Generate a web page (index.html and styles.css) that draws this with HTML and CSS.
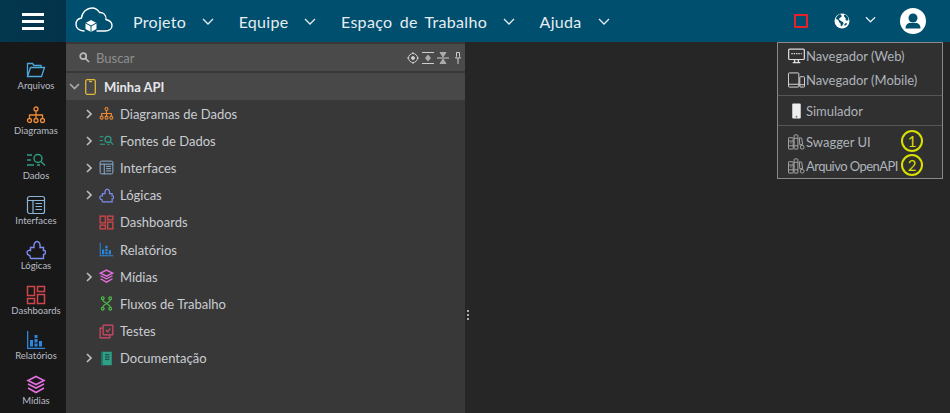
FILE: index.html
```html
<!DOCTYPE html>
<html lang="pt">
<head>
<meta charset="utf-8">
<title>Minha API</title>
<link rel="stylesheet" href="styles.css">
</head>
<body>
<header class="topbar">
  <button class="burger" aria-label="Menu"><span></span><span></span><span></span></button>
  <div class="brand">
    <svg width="38" height="26" viewBox="0 0 38 26" fill="none" stroke="#fff" stroke-width="1.400" stroke-linecap="round"><path d="M9 24C4 24 1 21 1 17.500C1 14 3.500 11.500 6.500 11C7 5 12 1 17 1C20.500 1 23 3 24.500 5.500C28 5 31.500 8 31 12.500C34.500 13.500 37 15.500 37 18.500C37 22 34 24 30 24H22"/><path d="M16 13L21.500 16V22L16 25L10.500 22V16Z" fill="#fff" stroke="none"/><path d="M10.500 16L16 19L21.500 16M16 19V25" stroke="#00506e" stroke-width="1"/></svg>
  </div>
  <nav class="mainnav">
    <a class="navitem">Projeto<svg class="chev" width="12" height="7" viewBox="0 0 12 7"><path d="M1 1l5 5 5-5"/></svg></a>
    <a class="navitem">Equipe<svg class="chev" width="12" height="7" viewBox="0 0 12 7"><path d="M1 1l5 5 5-5"/></svg></a>
    <a class="navitem wide">Espaço de Trabalho<svg class="chev" width="12" height="7" viewBox="0 0 12 7"><path d="M1 1l5 5 5-5"/></svg></a>
    <a class="navitem">Ajuda<svg class="chev" width="12" height="7" viewBox="0 0 12 7"><path d="M1 1l5 5 5-5"/></svg></a>
  </nav>
  <div class="tools">
    <span class="stopbox"></span>
    <svg class="globe" width="16" height="16" viewBox="0 0 16 16"><circle cx="8" cy="8" r="7.500" fill="#fff"/><path d="M5 1.500C3.500 3 2 4 2 6c1 .5 2 .5 2.500 1.500S5 9.500 6 10s.5 2.500 1 3.500c1-.5 2-2 2.500-3S8 8.500 7 8 5.500 6.500 5 6.500 5.500 5 6.500 4.500 8 3.500 7.500 2.500 6 1 5 1.500ZM10 2c-.5 1 .5 2 1 2.500s1 1 .5 2 1.500 1 2.500 1 .5-3-1-4.500S10.500 1.500 10 2ZM11 10.500c-.5.500-1 1.500-.5 2s2-.5 2.500-1.500-1.500-1-2-.5Z" fill="#00506e"/></svg>
    <svg class="chev chev-lang" width="11" height="7" viewBox="0 0 12 7"><path d="M1 1l5 5 5-5"/></svg>
    <svg class="avatar" width="26" height="26" viewBox="0 0 26 26"><circle cx="13" cy="13" r="13" fill="#fff"/><circle cx="13" cy="10" r="4.500" fill="#00506e"/><path d="M5.500 20.500c0-4 2.500-5.500 4.500-5.500h6c2 0 4.500 1.500 4.500 5.500Z" fill="#00506e"/></svg>
  </div>
</header>

<main class="workspace">
  <aside class="sidebar">
    <div class="sideitem"><svg class="sideicon" viewBox="0 0 20 20" fill="none" stroke="#4aa8da" stroke-width="1.300"><path d="M1.500 15.500V3.500h5l1.500 2h7v2"/><path d="M1.500 16.500l3-9h14l-3 9Z"/></svg><span>Arquivos</span></div>
    <div class="sideitem"><svg class="sideicon" viewBox="0 0 20 20" fill="none" stroke="#f08a35" stroke-width="1.300"><circle cx="10" cy="4" r="2"/><circle cx="3.500" cy="15.500" r="2"/><circle cx="10" cy="15.500" r="2"/><circle cx="16.500" cy="15.500" r="2"/><path d="M10 6v7.500M3.500 13.500V10h13v3.500"/></svg><span>Diagramas</span></div>
    <div class="sideitem"><svg class="sideicon" viewBox="0 0 20 20" fill="none" stroke="#2f9f85" stroke-width="1.400"><path d="M1 5h5M1 10h4M1 15h7"/><circle cx="12" cy="8.500" r="4"/><path d="M15 11.500l4 4M11 15h3"/></svg><span>Dados</span></div>
    <div class="sideitem"><svg class="sideicon" viewBox="0 0 20 20" fill="none" stroke="#8cb4d6" stroke-width="1.200"><rect x="1.500" y="1.500" width="17" height="17" rx="2"/><path d="M1.500 5.500h17M7 5.500v13M9.500 8.500h6.500M9.500 11.500h6.500M9.500 14.500h6.500"/></svg><span>Interfaces</span></div>
    <div class="sideitem"><svg class="sideicon" viewBox="0 0 20 20" fill="none" stroke="#7f8cf0" stroke-width="1.400"><path d="M4.500 7.500H8C7.500 4 9 1.500 11 1.500S14.500 4 14 7.500H17.500V10.500C19 10 19.500 11 19.500 12.500S18.500 14.500 17.500 14.500V18.500H5C3.500 18.500 5 16 3.500 15.500S1 14.500 1 12.500 3 10 4.500 10.500Z"/></svg><span>Lógicas</span></div>
    <div class="sideitem"><svg class="sideicon" viewBox="0 0 20 20" fill="none" stroke="#d0454a" stroke-width="1.500"><rect x="1.500" y="1.500" width="7" height="9"/><rect x="11.500" y="1.500" width="7" height="5"/><rect x="1.500" y="13.500" width="7" height="5"/><rect x="11.500" y="9.500" width="7" height="9"/></svg><span>Dashboards</span></div>
    <div class="sideitem"><svg class="sideicon" viewBox="0 0 20 20" fill="#2b86e0"><path d="M1 1h1.300v16.700H19V19H1Z"/><rect x="4" y="10" width="3" height="6.500"/><rect x="8.500" y="5" width="3" height="3"/><rect x="8.500" y="9" width="3" height="3.500"/><rect x="8.500" y="13.500" width="3" height="3"/><rect x="13" y="11" width="3" height="5.500"/></svg><span>Relatórios</span></div>
    <div class="sideitem"><svg class="sideicon" viewBox="0 0 20 20" fill="none" stroke="#e56fe0" stroke-width="1.600"><path d="M10 1.500l8 4-8 4-8-4Z"/><path d="M2 9l8 4 8-4M2 13l8 4.500 8-4.500"/></svg><span>Mídias</span></div>
  </aside>

  <section class="explorer">
    <div class="search">
      <svg class="searchicon" width="11" height="11" viewBox="0 0 11 11" fill="none" stroke="#bbb" stroke-width="1.700"><circle cx="4.200" cy="4.200" r="3"/><path d="M6.500 6.500L10 10"/></svg>
      <span class="searchtext">Buscar</span>
      <div class="searchtools">
        <svg width="12" height="12" viewBox="0 0 12 12" fill="none" stroke="#ccc" stroke-width="1"><circle cx="6" cy="6" r="4.500"/><circle cx="6" cy="6" r="1.500" fill="#ccc"/><path d="M6 0v1.500M6 10.500V12M0 6h1.500M10.500 6H12"/></svg>
        <svg width="12" height="12" viewBox="0 0 12 12" fill="none" stroke="#ccc"><path d="M0 .5h12M0 11.500h12"/><path d="M6 2.500l3 3.500-3 3.500-3-3.500Z" fill="#aaa" stroke="none"/></svg>
        <svg width="12" height="12" viewBox="0 0 12 12" fill="none" stroke="#ccc"><path d="M0 6h12"/><path d="M3 .5h6L6 5ZM3 11.500h6L6 7Z" fill="#aaa" stroke="#ccc" stroke-width=".6"/></svg>
        <svg class="pin" width="6" height="12" viewBox="0 0 6 12" fill="none" stroke="#ccc"><path d="M1.500.5h3v4l1 1.500h-5l1-1.500Z"/><path d="M3 6v6"/></svg>
      </div>
    </div>
    <div class="rootrow">
      <svg class="caret-down" width="11" height="7" viewBox="0 0 11 7" fill="none" stroke="#aaa" stroke-width="1.700"><path d="M1 1l4.500 4.500L10 1"/></svg>
      <svg class="rooticon" width="11" height="16" viewBox="0 0 11 16" fill="none" stroke="#e0b83a" stroke-width="1.300"><rect x=".7" y=".7" width="9.600" height="14.600" rx="1.500"/><path d="M4 2.500h3"/></svg>
      <span>Minha API</span>
    </div>
    <ul class="tree">
      <li class="treerow"><svg class="caret" width="6" height="10" viewBox="0 0 6 10"><path d="M1 1l4 4-4 4"/></svg><svg class="treeicon" viewBox="0 0 20 20" fill="none" stroke="#f08a35" stroke-width="1.400"><circle cx="10" cy="4" r="2"/><circle cx="3.500" cy="15.500" r="2"/><circle cx="10" cy="15.500" r="2"/><circle cx="16.500" cy="15.500" r="2"/><path d="M10 6v7.500M3.500 13.500V10h13v3.500"/></svg><span>Diagramas de Dados</span></li>
      <li class="treerow"><svg class="caret" width="6" height="10" viewBox="0 0 6 10"><path d="M1 1l4 4-4 4"/></svg><svg class="treeicon" viewBox="0 0 20 20" fill="none" stroke="#2f9f85" stroke-width="1.500"><path d="M1 5h5M1 10h4M1 15h7"/><circle cx="12" cy="8.500" r="4"/><path d="M15 11.500l4 4M11 15h3"/></svg><span>Fontes de Dados</span></li>
      <li class="treerow"><svg class="caret" width="6" height="10" viewBox="0 0 6 10"><path d="M1 1l4 4-4 4"/></svg><svg class="treeicon" viewBox="0 0 20 20" fill="none" stroke="#8cb4d6" stroke-width="1.300"><rect x="1.500" y="1.500" width="17" height="17" rx="2"/><path d="M1.500 5.500h17M7 5.500v13M9.500 8.500h6.500M9.500 11.500h6.500M9.500 14.500h6.500"/></svg><span>Interfaces</span></li>
      <li class="treerow"><svg class="caret" width="6" height="10" viewBox="0 0 6 10"><path d="M1 1l4 4-4 4"/></svg><svg class="treeicon" viewBox="0 0 20 20" fill="none" stroke="#7f8cf0" stroke-width="1.600"><path d="M4.500 7.500H8C7.500 4 9 1.500 11 1.500S14.500 4 14 7.500H17.500V10.500C19 10 19.500 11 19.500 12.500S18.500 14.500 17.500 14.500V18.500H5C3.500 18.500 5 16 3.500 15.500S1 14.500 1 12.500 3 10 4.500 10.500Z"/></svg><span>Lógicas</span></li>
      <li class="treerow leaf"><svg class="treeicon" viewBox="0 0 20 20" fill="none" stroke="#d0454a" stroke-width="1.800"><rect x="1.500" y="1.500" width="7" height="9"/><rect x="11.500" y="1.500" width="7" height="5"/><rect x="1.500" y="13.500" width="7" height="5"/><rect x="11.500" y="9.500" width="7" height="9"/></svg><span>Dashboards</span></li>
      <li class="treerow leaf"><svg class="treeicon" viewBox="0 0 20 20" fill="#2b86e0"><path d="M1 1h1.300v16.700H19V19H1Z"/><rect x="4" y="10" width="3" height="6.500"/><rect x="8.500" y="5" width="3" height="3"/><rect x="8.500" y="9" width="3" height="3.500"/><rect x="8.500" y="13.500" width="3" height="3"/><rect x="13" y="11" width="3" height="5.500"/></svg><span>Relatórios</span></li>
      <li class="treerow"><svg class="caret" width="6" height="10" viewBox="0 0 6 10"><path d="M1 1l4 4-4 4"/></svg><svg class="treeicon" viewBox="0 0 20 20" fill="none" stroke="#e56fe0" stroke-width="1.800"><path d="M10 1.500l8 4-8 4-8-4Z"/><path d="M2 9l8 4 8-4M2 13l8 4.500 8-4.500"/></svg><span>Mídias</span></li>
      <li class="treerow leaf"><svg class="treeicon" viewBox="0 0 20 20" fill="none" stroke="#4cb84a" stroke-width="1.700"><circle cx="5" cy="3" r="1.800"/><circle cx="15" cy="3" r="1.800"/><circle cx="5" cy="17" r="1.800"/><circle cx="15" cy="17" r="1.800"/><path d="M5 5c0 4 10 6 10 10M15 5c0 4-10 6-10 10"/></svg><span>Fluxos de Trabalho</span></li>
      <li class="treerow leaf"><svg class="treeicon" viewBox="0 0 20 20" fill="none" stroke="#d84a68" stroke-width="1.600"><rect x="5.500" y="1.500" width="13" height="13" rx="1"/><path d="M5 5.500H1.500v13h13V15"/><path d="M9 8l2.500 2.500L15 6"/></svg><span>Testes</span></li>
      <li class="treerow"><svg class="caret" width="6" height="10" viewBox="0 0 6 10"><path d="M1 1l4 4-4 4"/></svg><svg class="treeicon" viewBox="0 0 20 20"><path d="M3 1h14v18H3Z" fill="#2f9f85"/><path d="M3 1h2v18H3Z" fill="#1c6f5c"/><path d="M8 5h6M8 8h6M8 11h6" stroke="#1d3d38" stroke-width="1.300"/></svg><span>Documentação</span></li>
    </ul>
    <div class="handle"><i></i><i></i><i></i></div>
  </section>
  <div class="canvas"></div>
</main>

<div class="runmenu">
  <div class="menugroup">
    <div class="menuitem"><svg class="menuicon" viewBox="0 0 18 16" fill="none" stroke="#ddd" stroke-width="1.300"><rect x=".7" y=".7" width="16.600" height="11" rx="1"/><path d="M3.500 5.500h11" stroke-dasharray="1.500 1"/><path d="M5 15h8M7 12v3M11 12v3" stroke-width="1.500"/></svg><span>Navegador (Web)</span></div>
    <div class="menuitem"><svg class="menuicon" viewBox="0 0 18 16" fill="none" stroke="#ddd" stroke-width="1"><rect x=".5" y=".5" width="11" height="15" rx="1"/><path d="M.5 12.500h11"/><rect x="12.500" y="4.500" width="5" height="11" rx="1" fill="#303030"/><path d="M12.500 13h5"/></svg><span>Navegador (Mobile)</span></div>
  </div>
  <div class="menugroup">
    <div class="menuitem single"><svg class="menuicon" viewBox="0 0 18 16"><path d="M5.500 0h7a1 1 0 0 1 1 1v14a1 1 0 0 1-1 1h-7a1 1 0 0 1-1-1V1a1 1 0 0 1 1-1Z" fill="#eee"/><circle cx="9" cy="14" r=".9" fill="#666"/></svg><span>Simulador</span></div>
  </div>
  <div class="menugroup last">
    <div class="menuitem"><svg class="menuicon" viewBox="0 0 18 16" fill="none" stroke="#aaa" stroke-width="1"><rect x=".5" y="3.500" width="5" height="12" rx=".5"/><rect x="6.500" y=".5" width="4" height="15" rx=".5"/><path d="M.5 7h5M.5 12h5M6.500 4h4M6.500 12h4"/><path d="M12 3.500l2.500.5 1 6.500-3 .5Z"/><circle cx="15" cy="13.500" r="2"/><path d="M2 9h2" stroke="#888"/></svg><span>Swagger UI</span><b class="badge">1</b></div>
    <div class="menuitem"><svg class="menuicon" viewBox="0 0 18 16" fill="none" stroke="#aaa" stroke-width="1"><rect x=".5" y="3.500" width="5" height="12" rx=".5"/><rect x="6.500" y=".5" width="4" height="15" rx=".5"/><path d="M.5 7h5M.5 12h5M6.500 4h4M6.500 12h4"/><path d="M12 3.500l2.500.5 1 6.500-3 .5Z"/><circle cx="15" cy="13.500" r="2"/><path d="M2 9h2" stroke="#888"/></svg><span class="tight">Arquivo OpenAPI</span><b class="badge">2</b></div>
  </div>
</div>
</body>
</html>
```
FILE: styles.css
```css
* { box-sizing: border-box; }
html, body { height: 100%; }
body {
  margin: 0;
  width: 950px;
  height: 413px;
  overflow: hidden;
  background: #262626;
  font-family: "Lato", "Noto Sans", sans-serif;
  color: #c9ccd2;
  position: relative;
}
.topbar {
  height: 42px;
  display: flex;
  align-items: center;
  background: #004f6e;
}
.burger {
  width: 66px;
  height: 42px;
  border: 0;
  padding: 0;
  background: linear-gradient(90deg, #02384f, #03324a);
  display: flex;
  flex-direction: column;
  align-items: center;
  justify-content: center;
  gap: 4px;
}
.burger span { width: 22px; height: 3px; background: #fff; }
.brand { width: 67px; padding-left: 9px; margin-top: -2px; display: flex; }
.mainnav { display: flex; align-items: center; }
.navitem {
  display: flex;
  align-items: center;
  color: #e6edf2;
  font-size: 16px;
  letter-spacing: .3px;
  gap: 16px;
  margin-right: 24.500px;
}
.navitem.wide { word-spacing: 3px; }
.chev { fill: none; stroke: #e6edf2; stroke-width: 1.300; }
.tools { margin-left: auto; display: flex; align-items: center; padding-right: 24px; }
.stopbox { width: 14px; height: 14px; border: 2px solid #e8202a; border-radius: 1px; margin-right: 26px; }
.chev-lang { margin: 0 24px 4px 15px; }
.workspace { display: flex; height: 371px; }
.sidebar { width: 66px; background: #181818; padding: 18px 0 0 6px; flex: none; }
.sideitem {
  height: 45px;
  display: flex;
  flex-direction: column;
  align-items: center;
  font-size: 9.500px;
  color: #b9bdc4;
}
.sideicon { width: 20px; height: 20px; flex: none; }
.sideitem span { line-height: 12px; }
.explorer { width: 399px; background: #383838; padding-top: 2px; position: relative; flex: none; }
.search {
  height: 27px;
  background: #4a4a4a;
  display: flex;
  align-items: center;
  padding: 0 4px 0 13px;
}
.searchtext { margin-left: 6px; font-size: 13px; color: #8f8f8f; }
.searchtools { margin-left: auto; display: flex; align-items: center; gap: 3px; }
.pin { margin-left: 3px; }
.rootrow {
  margin-top: 2px;
  height: 27px;
  background: #484848;
  display: flex;
  align-items: center;
  padding-left: 3px;
  font-size: 13px;
  font-weight: 700;
  color: #e4e6ea;
}
.caret-down { margin-right: 5px; }
.rooticon { margin-right: 8px; }
.tree { list-style: none; margin: 0; padding: 0; }
.treerow {
  height: 27.200px;
  display: flex;
  align-items: center;
  padding-left: 20px;
  font-size: 13px;
}
.treerow.leaf { padding-left: 33px; }
.caret { fill: none; stroke: #bdbdbd; stroke-width: 1.600; margin-right: 7px; }
.treeicon { width: 15px; height: 15px; margin-right: 6px; flex: none; }
.handle {
  position: absolute;
  right: -4px;
  top: 268px;
  display: flex;
  flex-direction: column;
  gap: 2px;
}
.handle i { width: 2px; height: 2px; background: #aaa; display: block; }
.canvas { flex: 1; background: #262626; }
.runmenu {
  position: absolute;
  left: 777px;
  top: 42px;
  width: 166px;
  background: #303030;
  border: 1px solid #8a8a8a;
  font-size: 13px;
  color: #aeb3ba;
}
.menugroup { border-bottom: 1px solid #555; padding: 1px 0 3px; }
.menugroup + .menugroup { padding: 0; }
.menugroup.last { border-bottom: 0; padding: 4px 0 0; }
.menuitem {
  height: 24px;
  display: flex;
  align-items: center;
  padding-left: 10px;
  gap: 1px;
  position: relative;
}
.menuitem.single { height: 29px; }
.menuicon { width: 17px; height: 16px; flex: none; }
.tight { letter-spacing: -.55px; }
.badge {
  position: absolute;
  left: 123px;
  top: 0;
  width: 22px;
  height: 22px;
  border: 2px solid #d8e000;
  border-radius: 50%;
  color: #d8e000;
  font-size: 15px;
  font-weight: 400;
  display: flex;
  align-items: center;
  justify-content: center;
}
```
